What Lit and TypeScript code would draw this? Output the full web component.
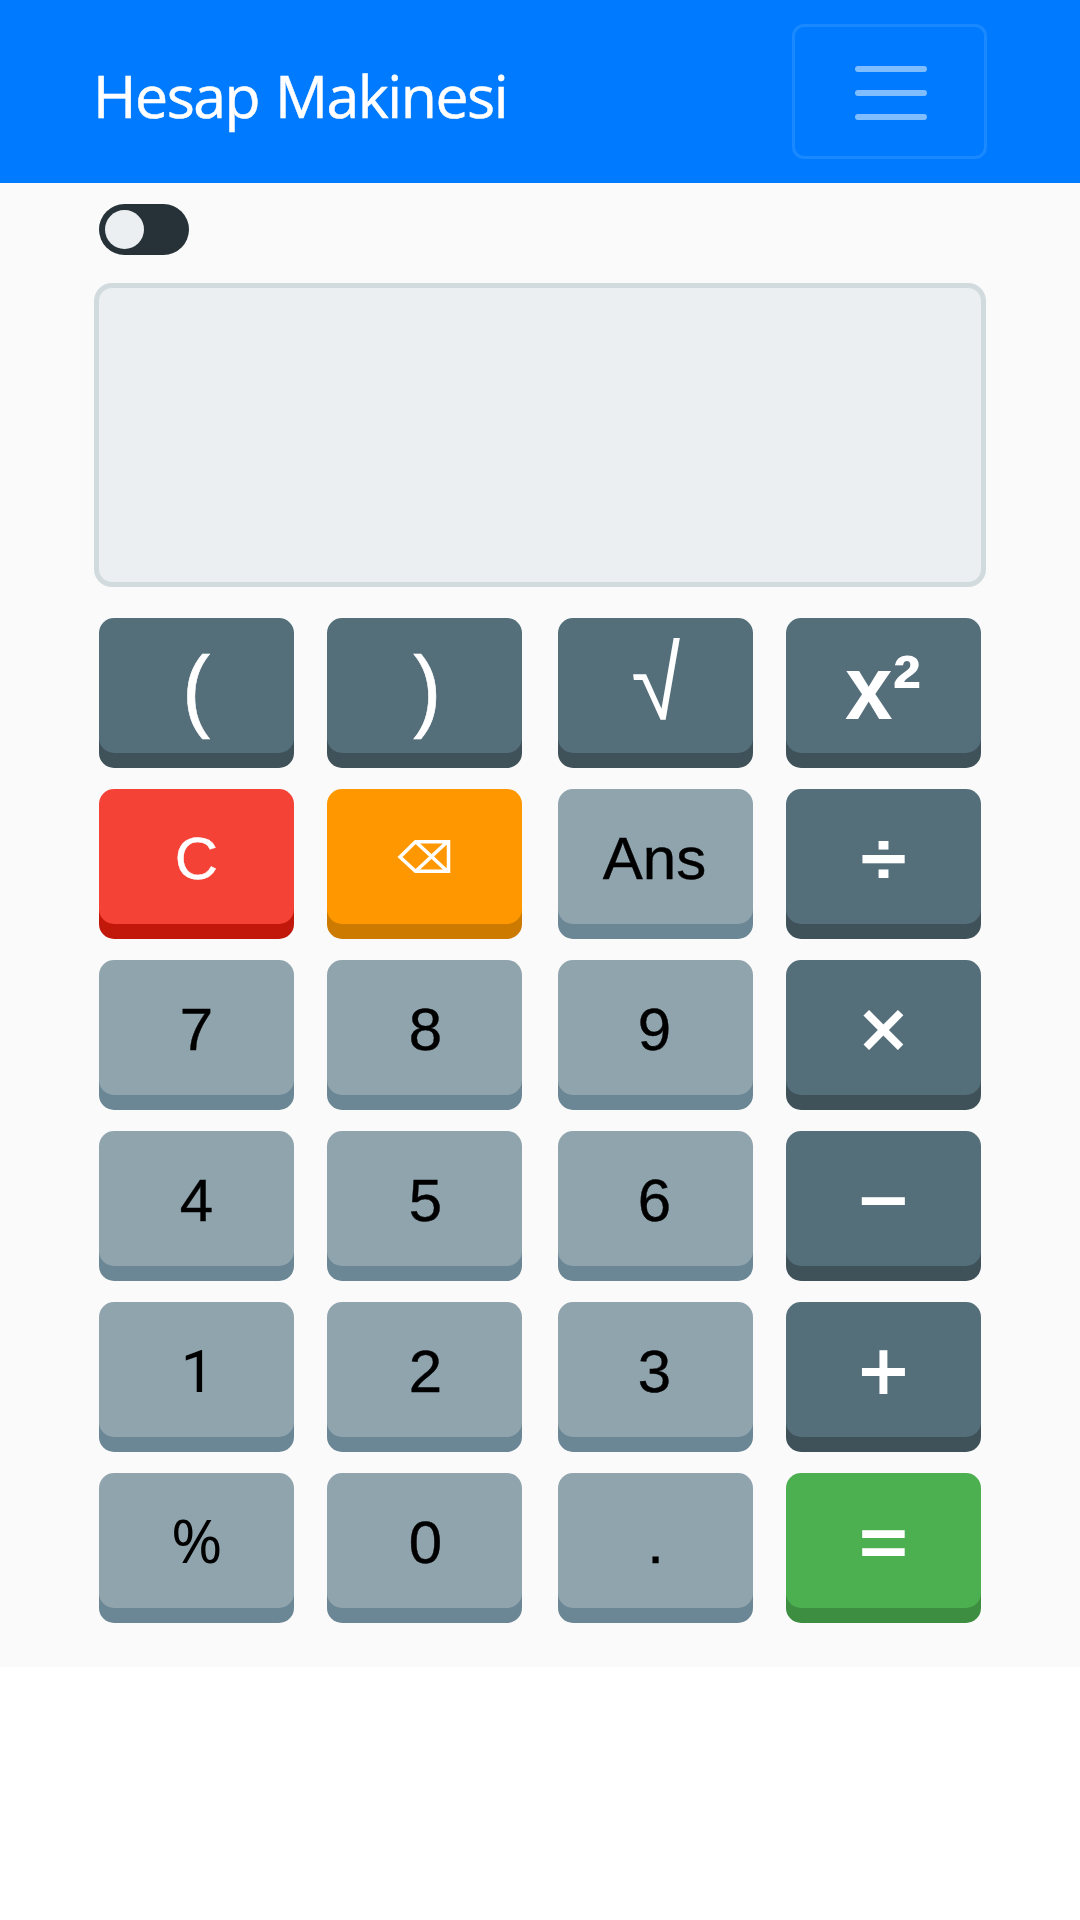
import { LitElement, html, css } from "lit";
import { customElement } from "lit/decorators.js";

type Key = { label: string; tone: string; face: string };

const KEYS: Key[] = [
  { label: "(", tone: "dark", face: "paren open" },
  { label: ")", tone: "dark", face: "paren close" },
  { label: "√", tone: "dark", face: "root" },
  { label: "x²", tone: "dark", face: "square" },
  { label: "C", tone: "red", face: "plain" },
  { label: "⌫", tone: "orange", face: "erase" },
  { label: "Ans", tone: "light", face: "plain third" },
  { label: "÷", tone: "dark", face: "divide" },
  { label: "7", tone: "light", face: "plain" },
  { label: "8", tone: "light", face: "plain second" },
  { label: "9", tone: "light", face: "plain third" },
  { label: "×", tone: "dark", face: "op" },
  { label: "4", tone: "light", face: "plain" },
  { label: "5", tone: "light", face: "plain second" },
  { label: "6", tone: "light", face: "plain third" },
  { label: "−", tone: "dark", face: "op" },
  { label: "1", tone: "light", face: "one" },
  { label: "2", tone: "light", face: "plain second" },
  { label: "3", tone: "light", face: "plain third" },
  { label: "+", tone: "dark", face: "op" },
  { label: "%", tone: "light", face: "percent" },
  { label: "0", tone: "light", face: "plain second" },
  { label: ".", tone: "light", face: "plain" },
  { label: "=", tone: "green", face: "op" },
];

@customElement("calc-key")
class CalcKey extends LitElement {
  static properties = { label: {}, tone: {}, face: {} };
  declare label: string;
  declare tone: string;
  declare face: string;

  static styles = css`
    :host { display: block; height: 135px; }
    .key {
      box-sizing: border-box; width: 195px; height: 135px; margin: 0; padding: 0; border: 0;
      border-radius: 15px; display: flex; align-items: center; justify-content: center;
      font-family: "Liberation Sans", sans-serif; font-size: 60px; line-height: 69px; color: #000;
    }
    .glyph { display: block; white-space: nowrap; }
    .icon { display: block; margin: 0 1px 0 0; }
    .dark { background: #546e7a; box-shadow: 0 15px #3f5159; color: #fff; }
    .light { background: #90a4ae; box-shadow: 0 15px #6b8796; }
    .red { background: #f44336; box-shadow: 0 15px #c2170b; color: #fff; }
    .orange { background: #ff9800; box-shadow: 0 15px #cc7a00; color: #fff; }
    .green { background: #4caf50; box-shadow: 0 15px #3d8e40; color: #fff; }
    .plain { -webkit-text-stroke: 0.4px currentColor; }
    .plain .glyph { transform: translateY(2px); }
    .second .glyph { transform: translate(1px, 2px); }
    .third .glyph { transform: translate(-1px, 2px); }
    .one { font-family: Roboto, sans-serif; }
    .one .glyph { transform: translate(1px, 2px); }
    .op { font-family: "Open Sans", sans-serif; font-size: 90px; font-weight: 600; }
    .divide { font-size: 84px; font-weight: 700; }
    .divide .glyph { transform: translateY(2px) scaleY(0.88); }
    .square { font-size: 90px; font-weight: 700; }
    .square .glyph { transform: translateY(3px) scaleX(0.95); }
    .paren { font-size: 91px; -webkit-text-stroke: 0.6px #fff; }
    .open .glyph { transform: translate(0, 3px) scaleX(0.92); }
    .close .glyph { transform: translate(3px, 3px) scaleX(0.92); }
    .root { font-size: 90px; }
    .root .glyph { transform: translate(3px, -1px) scale(1.08, 1.14) skewX(7deg); }
    .percent { font-family: "Open Sans", sans-serif; }
    .percent .glyph { transform: scaleX(1.04); }
  `;

  render() {
    const content = this.face === "erase"
      ? html`<svg class="icon" role="img" aria-label=${this.label} width="54" height="36" viewBox="0 0 54 36" fill="none" stroke="currentColor" stroke-width="3.5">
          <path d="M3 18 18.5 2.7H51.5V32.3H18.5ZM19 3 50 32M50 3 19 32" />
        </svg>`
      : html`<span class="glyph">${this.label}</span>`;
    return html`<button class="key ${this.tone} ${this.face}">${content}</button>`;
  }
}

@customElement("app-root")
class AppRoot extends LitElement {
  static styles = css`
    :host { display: block; }
    .page { min-height: 1920px; background: #fff; }
    .nav {
      box-sizing: border-box; height: 183px; padding: 0 93px; background: #007bff;
      display: flex; align-items: center; justify-content: space-between;
    }
    .brand {
      color: #fff; font: 400 59px/90px "Open Sans", sans-serif; letter-spacing: -1.5px;
      word-spacing: 2px; -webkit-text-stroke: 0.5px #fff;
      white-space: nowrap; padding-top: 6px;
    }
    .menu {
      box-sizing: border-box; width: 195px; height: 135px; padding: 3px 0 0 3px; background: none;
      border: 3px solid rgba(255, 255, 255, 0.1); border-radius: 12px;
      display: flex; align-items: center; justify-content: center;
    }
    .main { box-sizing: border-box; height: 1484px; background: #fafafa; padding: 21px 94px 0; }
    .switch {
      box-sizing: border-box; width: 90px; height: 51px; margin-left: 5px; padding: 6px;
      border-radius: 26px; background: #263238; display: flex;
    }
    .knob { width: 39px; height: 39px; border-radius: 50%; background: #eceff1; }
    .display {
      box-sizing: border-box; height: 304px; margin-top: 28px; background: #eceff1;
      border: 5px solid #d1dadd; border-radius: 18px;
    }
    .keys {
      display: grid; grid-template-columns: 228px 231px 228px 195px; grid-auto-rows: 135px;
      row-gap: 36px; padding: 31px 0 0 5px;
    }
  `;

  render() {
    return html`
      <div class="page">
        <header class="nav">
          <span class="brand">Hesap Makinesi</span>
          <button class="menu">
            <svg width="90" height="90" viewBox="0 0 30 30" fill="none">
              <path stroke="rgba(255,255,255,0.5)" stroke-linecap="round" stroke-miterlimit="10" stroke-width="2" d="M4 7h22M4 15h22M4 23h22" />
            </svg>
          </button>
        </header>
        <main class="main">
          <div class="switch"><div class="knob"></div></div>
          <div class="display"></div>
          <div class="keys">
            ${KEYS.map((k) => html`<calc-key .label=${k.label} .tone=${k.tone} .face=${k.face}></calc-key>`)}
          </div>
        </main>
      </div>
    `;
  }
}
